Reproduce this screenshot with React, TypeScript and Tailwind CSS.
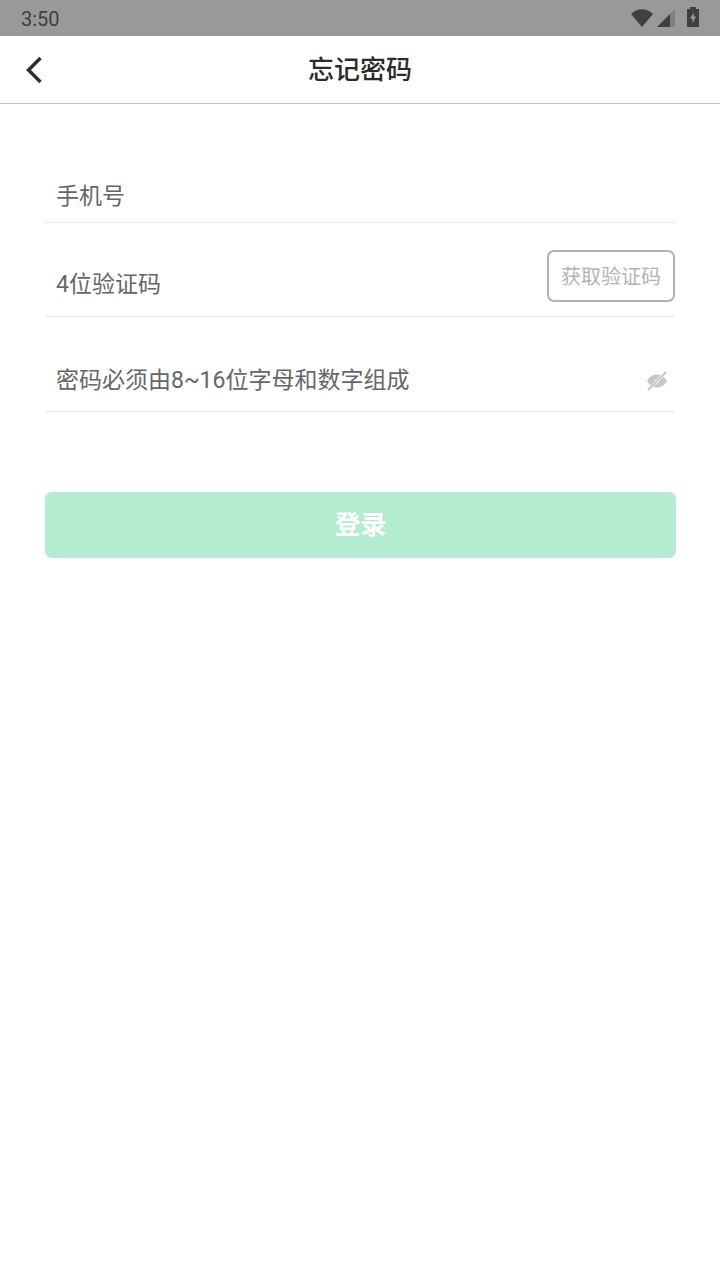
const font = "font-['Roboto','Noto_Sans_CJK_SC',sans-serif]";

const StatusBar = () => (
  <div className="h-9 bg-[#999999] flex items-start justify-between pl-[21px] pr-[21px]">
    <span className="text-[20px] leading-9 mt-[1px] text-[#404040]">3:50</span>
    <div className="flex items-start pt-[7px]">
      <svg width="22" height="18" viewBox="0 0 22 18" className="mt-[2px] mr-[4px]">
        <path d="M0 5C6 -1.500 16 -1.500 22 5L11 18Z" fill="#404040" />
      </svg>
      <svg width="18" height="18" viewBox="0 0 18 18" className="mt-[2px] mr-[12px]">
        <path d="M0 18L18 0V18Z" fill="#808080" />
        <path d="M0 18L13 5V18Z" fill="#404040" />
      </svg>
      <svg width="12" height="20" viewBox="0 0 12 20">
        <path d="M3 0H9V2H12V20H0V2H3Z" fill="#404040" />
        <path d="M7 5L3 11.500H5.500V16.500L9 9.500H6.500Z" fill="#999999" />
      </svg>
    </div>
  </div>
);

const Field = ({ text, className, children }: { text: string; className: string; children?: React.ReactNode }) => (
  <div className={`mx-[45px] border-b border-[#e5e5e5] flex items-center justify-between pl-[11px] ${className}`}>
    <span className="text-[23px] leading-8 text-[#666666]">{text}</span>
    {children}
  </div>
);

export default function App() {
  return (
    <div className={`w-[720px] h-[1280px] bg-white flex flex-col ${font}`}>
      <StatusBar />
      <header className="h-[68px] border-b border-[#c4c4c4] flex items-center justify-center pt-[2px] relative">
        <button className="absolute left-[25px] top-[20px]">
          <svg width="18" height="28" viewBox="0 0 18 28" fill="none">
            <path d="M15.500 2L3.500 14L15.500 26" stroke="#2b2b3a" strokeWidth="3.500" />
          </svg>
        </button>
        <h1 className="text-[26px] font-medium text-[#2b2b2b]">忘记密码</h1>
      </header>

      <Field text="手机号" className="mt-[60px] h-[59px] pt-[8px]" />
      <Field text="4位验证码" className="h-[94px] pt-[30px] pr-0">
        <button className="w-[128px] h-[52px] mt-[-18px] pt-[2px] rounded-[7px] border-2 border-[#b3b3b3] text-[20px] text-[#b3b3b3]">
          获取验证码
        </button>
      </Field>
      <Field text="密码必须由8~16位字母和数字组成" className="h-[95px] pt-[34px] pr-[7px]">
        <svg width="22" height="20" viewBox="0 0 22 20">
          <path d="M1 10C3.500 5.500 7 3.500 11 3.500S18.500 5.500 21 10C18.500 14.500 15 16.500 11 16.500S3.500 14.500 1 10Z" fill="#c8c8c8" />
          <circle cx="11" cy="10" r="2" fill="#ffffff" />
          <path d="M2 19L20 1" stroke="#ffffff" strokeWidth="3" />
          <path d="M2 19L20 1" stroke="#c8c8c8" strokeWidth="2" />
        </svg>
      </Field>

      <button className="mx-[45px] mt-[80px] h-[66px] w-[631px] rounded-[7px] bg-[#b3ecd0] text-[26px] font-bold text-white">
        登录
      </button>
    </div>
  );
}
